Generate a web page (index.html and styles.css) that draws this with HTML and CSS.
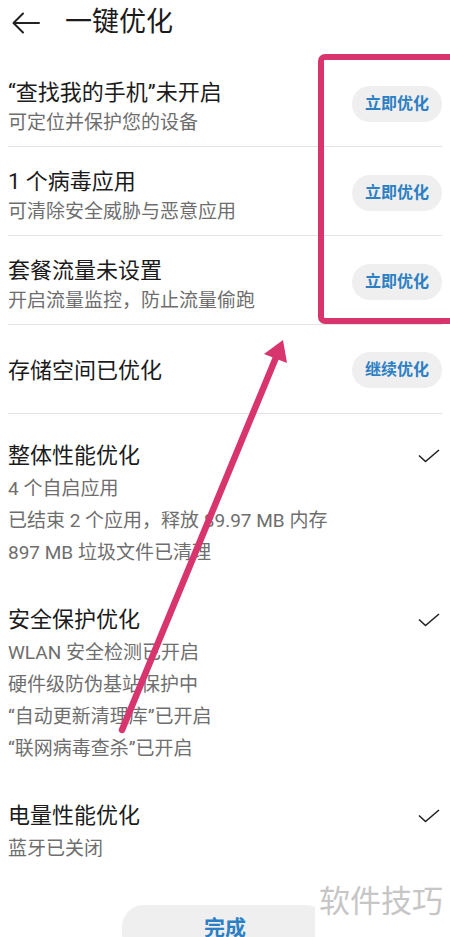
FILE: index.html
```html
<!DOCTYPE html>
<html lang="zh-CN">
<head>
  <meta charset="UTF-8" />
  <title>一键优化</title>
  <link rel="stylesheet" href="styles.css">
</head>
<body>
  <div class="page">
    <header class="topbar">
      <svg class="back" width="30" height="24" viewBox="0 0 30 24">
        <path d="M28 12 H3 M12 2.5 L2.5 12 L12 21.5" fill="none" stroke="#222" stroke-width="2" stroke-linecap="round" stroke-linejoin="round"/>
      </svg>
      <h1>一键优化</h1>
    </header>

    <div class="list">
      <div class="item">
        <div class="text">
          <div class="title">“查找我的手机”未开启</div>
          <div class="sub">可定位并保护您的设备</div>
        </div>
        <span class="pill">立即优化</span>
      </div>
      <div class="item">
        <div class="text">
          <div class="title">1 个病毒应用</div>
          <div class="sub">可清除安全威胁与恶意应用</div>
        </div>
        <span class="pill">立即优化</span>
      </div>
      <div class="item">
        <div class="text">
          <div class="title">套餐流量未设置</div>
          <div class="sub">开启流量监控，防止流量偷跑</div>
        </div>
        <span class="pill">立即优化</span>
      </div>
      <div class="item single">
        <div class="text">
          <div class="title">存储空间已优化</div>
        </div>
        <span class="pill">继续优化</span>
      </div>

      <div class="section">
        <div class="sec-head">
          <div class="title">整体性能优化</div>
          <svg class="check" width="22" height="14" viewBox="0 0 22 14"><polyline points="1,6.5 7.5,12.5 21,1" fill="none" stroke="#222" stroke-width="1.6"/></svg>
        </div>
        <div class="sub">4 个自启应用</div>
        <div class="sub">已结束 2 个应用，释放 89.97 MB 内存</div>
        <div class="sub">897 MB 垃圾文件已清理</div>
      </div>

      <div class="section">
        <div class="sec-head">
          <div class="title">安全保护优化</div>
          <svg class="check" width="22" height="14" viewBox="0 0 22 14"><polyline points="1,6.5 7.5,12.5 21,1" fill="none" stroke="#222" stroke-width="1.6"/></svg>
        </div>
        <div class="sub">WLAN 安全检测已开启</div>
        <div class="sub">硬件级防伪基站保护中</div>
        <div class="sub">“自动更新清理库”已开启</div>
        <div class="sub">“联网病毒查杀”已开启</div>
      </div>

      <div class="section">
        <div class="sec-head">
          <div class="title">电量性能优化</div>
          <svg class="check" width="22" height="14" viewBox="0 0 22 14"><polyline points="1,6.5 7.5,12.5 21,1" fill="none" stroke="#222" stroke-width="1.6"/></svg>
        </div>
        <div class="sub">蓝牙已关闭</div>
      </div>
    </div>

    <div class="footer">
      <button class="done">完成</button>
    </div>

    <!-- annotation overlay -->
    <div class="mark-box"></div>
    <svg class="mark-arrow" width="450" height="937" viewBox="0 0 450 937">
      <line x1="122" y1="730" x2="277" y2="355" stroke="#d8356e" stroke-width="6.5" stroke-linecap="round"/>
      <polygon points="283,340 264,354 287,363" fill="#d8356e"/>
    </svg>
    <div class="watermark">软件技巧</div>
  </div>
</body>
</html>
```

FILE: styles.css
```css
* {
  box-sizing: border-box;
  margin: 0;
  padding: 0;
}

body {
  font-family: Roboto, "Noto Sans CJK SC", sans-serif;
  background: #fff;
  color: #1b1b1b;
  width: 450px;
  height: 937px;
  overflow: hidden;
}

.page {
  position: relative;
  height: 937px;
}

.topbar {
  height: 58px;
  display: flex;
  align-items: flex-start;
  padding: 9px 0 0 11px;
}

.back {
  margin-top: 2px;
}

.topbar h1 {
  font-size: 27px;
  font-weight: 400;
  line-height: 26px;
  margin-left: 24px;
}

.list {
  padding: 0 8px;
}

.item {
  height: 89px;
  display: flex;
  justify-content: space-between;
  align-items: flex-start;
  padding-top: 20px;
  border-bottom: 1px solid #e4e4e4;
}

.item.single {
  align-items: center;
  padding-top: 4px;
  margin-bottom: 3px;
}

.title {
  font-size: 22px;
  line-height: 30px;
}

.sub {
  font-size: 19px;
  line-height: 30px;
  color: #6e6e6e;
}

.item .pill {
  margin-top: 8px;
}

.item.single .pill {
  margin-top: -2px;
}

.pill {
  display: inline-block;
  width: 90px;
  height: 36px;
  line-height: 36px;
  text-align: center;
  border-radius: 18px;
  background: #efefef;
  color: #2d7fc4;
  font-size: 16px;
  font-weight: 700;
}

.section {
  padding-top: 22px;
  margin-bottom: 12px;
}

.section .sub {
  line-height: 32px;
}

.sec-head {
  display: flex;
  justify-content: space-between;
  align-items: center;
  height: 34px;
}

.check {
  margin-right: 2px;
}

.footer {
  display: flex;
  justify-content: center;
  margin-top: 40px;
}

.done {
  width: 206px;
  height: 50px;
  border: none;
  border-radius: 22px;
  background: #efefef;
  color: #2d7fc4;
  font-family: inherit;
  font-size: 21px;
  font-weight: 700;
  padding-bottom: 8px;
}

.mark-box {
  position: absolute;
  left: 318px;
  top: 54px;
  width: 150px;
  height: 270px;
  border: 6px solid #d8356e;
  border-radius: 7px;
}

.mark-arrow {
  position: absolute;
  left: 0;
  top: 0;
}

.watermark {
  position: absolute;
  left: 315px;
  top: 880px;
  right: 0;
  bottom: 0;
  background: #fff;
  color: #c6c6c6;
  font-size: 31px;
  line-height: 44px;
  padding-left: 4px;
}
```
